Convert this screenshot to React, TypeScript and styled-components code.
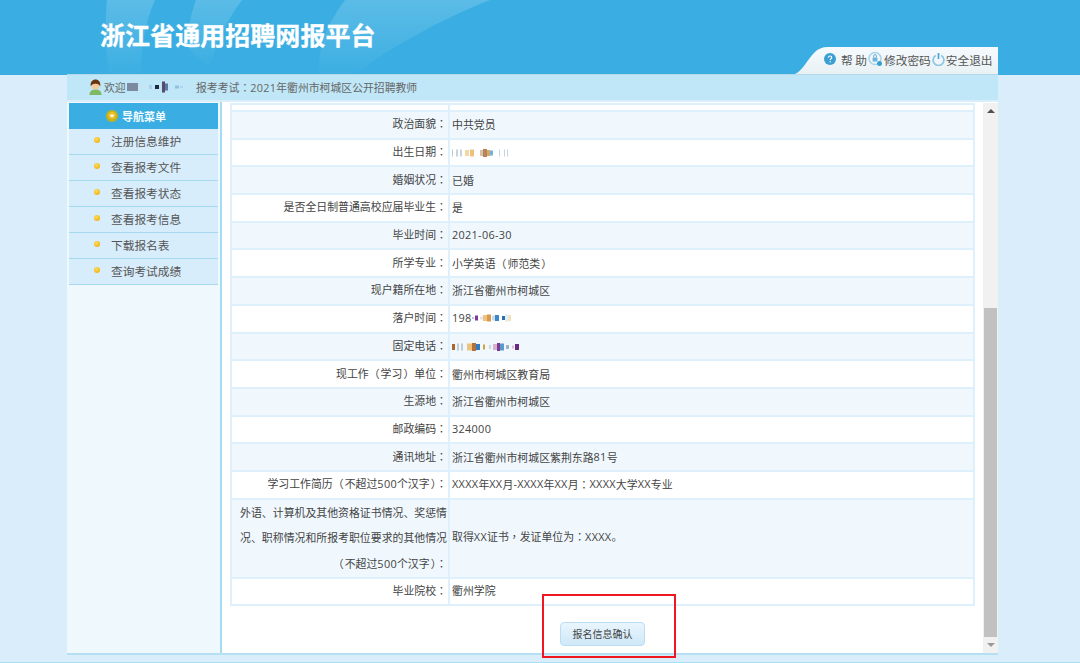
import { Fragment } from "react";
import styled, { createGlobalStyle } from "styled-components";

const GlobalStyle = createGlobalStyle`
  html, body {
    margin: 0;
    padding: 0;
    height: 100%;
    overflow: hidden;
    background: #d9edfb;
    font-family: "Noto Sans CJK SC", "Liberation Sans", sans-serif;
  }
`;

const Page = styled.div`
  position: relative;
  display: flex;
  flex-direction: column;
  height: 663px;
`;

const Header = styled.header`
  position: relative;
  display: flex;
  justify-content: space-between;
  align-items: flex-end;
  height: 75px;
  padding: 0 82px 0 100px;
  box-sizing: border-box;
  background: #3aaee2;
  flex: none;
`;

const Swoosh = styled.svg`
  position: absolute;
  left: 0;
  top: 0;
`;

const Title = styled.h1`
  position: relative;
  align-self: flex-start;
  margin: 17px 0 0;
  font-size: 25px;
  letter-spacing: 0.05px;
  line-height: 34px;
  font-weight: 700;
  color: #ffffff;
  -webkit-text-stroke: 0.3px #ffffff;
`;

const Tab = styled.nav`
  position: relative;
  display: flex;
  align-items: center;
  gap: 1px;
  width: 208px;
  height: 28px;
  padding: 0 0 4px 34px;
  box-sizing: border-box;
  background: linear-gradient(#f5fafd, #e9f1f5);
  clip-path: path("M0 28 C6 28 10 24 14 19 C22 8 26 0 38 0 L208 0 L208 28 Z");
  font-size: 11.7px;
  color: #555;
`;

const TabLink = styled.span<{ $gap?: number }>`
  display: flex;
  align-items: center;
  gap: ${(p) => p.$gap ?? 1}px;
  white-space: pre;
`;

const Frame = styled.div`
  position: relative;
  width: 931px;
  margin: -1px 0 0 67px;
  flex: none;
`;

const StatusBar = styled.div`
  display: flex;
  align-items: center;
  height: 26px;
  box-sizing: border-box;
  padding: 0 0 1px 21px;
  border-top: 1px solid #b4d8e8;
  background: #bfe7f7;
  font-size: 10.85px;
  color: #666;
`;

const Welcome = styled.div`
  display: flex;
  align-items: center;
  gap: 1px;
  width: 108px;
`;

const Main = styled.div`
  display: flex;
  height: 553px;
  margin-top: 2px;
  box-sizing: border-box;
  border-bottom: 2px solid #b5dff3;
`;

const Sidebar = styled.aside`
  width: 155px;
  box-sizing: border-box;
  padding: 1px 2px 0;
  border-right: 2px solid #a5dcf3;
  background: #eff8fd;
  flex: none;
`;

const NavTitle = styled.div`
  display: flex;
  align-items: center;
  gap: 4px;
  height: 26px;
  padding-left: 37px;
  background: #3aaee2;
  font-size: 11px;
  font-weight: 700;
  color: #f2fbff;
`;

const NavItem = styled.div`
  display: flex;
  align-items: center;
  gap: 11px;
  height: 26px;
  box-sizing: border-box;
  padding: 0 0 2px 25px;
  border-bottom: 1px solid #a5d9f0;
  background: #d8edfb;
  font-size: 11.7px;
  color: #555;
`;

const Bullet = styled.i`
  width: 6px;
  height: 6px;
  margin-top: -1px;
  border-radius: 50%;
  background: radial-gradient(circle at 40% 35%, #ffdf5a, #eda000);
`;

const Content = styled.main`
  display: flex;
  flex: 1;
  min-width: 0;
  padding-top: 1px;
  background: #ffffff;
`;

const ScrollArea = styled.div`
  flex: 1;
  min-width: 0;
  padding: 0 8px;
  overflow: hidden;
`;

const Table = styled.table`
  width: 745px;
  table-layout: fixed;
  border-collapse: collapse;
  font-size: 10.9px;
  line-height: 20px;
  color: #444;
`;

const Row = styled.tr<{ $alt?: boolean }>`
  height: 27.7px;
  background: ${(p) => (p.$alt ? "#f0f8fe" : "#ffffff")};
`;

const TallRow = styled(Row)`
  height: 79px;
`;

const TopRow = styled.tr`
  height: 7px;
`;

const Label = styled.td`
  width: 215px;
  padding: 0 1px 3px 0;
  border: 2px solid #def0fc;
  text-align: right;
  white-space: nowrap;
`;

const TallLabel = styled(Label)`
  line-height: 25.6px;
  padding-bottom: 0;
`;

const Value = styled.td`
  padding: 0 0 3px 2px;
  border: 2px solid #def0fc;
  white-space: nowrap;
`;

const ValueLine = styled.span`
  display: inline-flex;
  align-items: center;
  vertical-align: middle;
`;

const Punct = styled.span`
  font-family: "Noto Sans CJK TC", sans-serif;
`;

const OpenParen = styled(Punct)`
  margin-right: 1px;
`;

const CloseParen = styled(Punct)`
  margin-left: 1px;
`;

const Latin = styled.span`
  font-family: "Open Sans", sans-serif;
  letter-spacing: 0.3px;
`;

const ConfirmRow = styled.div`
  display: flex;
  justify-content: center;
  padding-top: 16px;
`;

const ConfirmButton = styled.button`
  width: 85px;
  height: 24px;
  padding: 0 0 2px;
  border: 1px solid #b9def3;
  border-radius: 4px;
  background: linear-gradient(#e9f5fd, #cfe8f8);
  font-family: inherit;
  font-size: 10px;
  color: #444;
`;

const Scrollbar = styled.div`
  display: flex;
  flex-direction: column;
  width: 15px;
  background: #f1f1f1;
  flex: none;
`;

const ScrollButton = styled.div`
  display: flex;
  align-items: center;
  justify-content: center;
  height: 17px;
  padding-bottom: 1px;
  box-sizing: border-box;
  flex: none;
`;

const Arrow = styled.i<{ $down?: boolean }>`
  width: 0;
  height: 0;
  border-left: 4px solid transparent;
  border-right: 4px solid transparent;
  ${(p) => (p.$down ? "border-top: 4px solid #999;" : "border-bottom: 4px solid #505050;")}
`;

const Track = styled.div`
  flex: 1;
  padding: 188px 1px 0;
`;

const Thumb = styled.div`
  height: 329px;
  background: #c1c1c1;
`;

const Footer = styled.div`
  height: 1px;
  margin-top: auto;
  background: #a9e0f7;
  flex: none;
`;

const Annotation = styled.div`
  position: absolute;
  left: 542px;
  top: 594px;
  width: 134px;
  height: 64px;
  box-sizing: border-box;
  border: 2px solid #f01622;
  pointer-events: none;
`;

const MosaicBox = styled.svg`
  display: block;
  filter: blur(0.6px);
  flex: none;
`;

type Dot = [number, number, number, string];

const Mosaic = ({ width, dots }: { width: number; dots: Dot[] }) => (
  <MosaicBox width={width} height={12} viewBox={`0 0 ${width} 12`}>
    {dots.map(([x, w, h, c], i) => (
      <rect key={i} x={x} y={(12 - h) / 2} width={w} height={h} fill={c} />
    ))}
  </MosaicBox>
);

const birthDots: Dot[] = [
  [0, 1, 7, "#b9cad6"], [4, 2, 7, "#c6d4de"], [8, 2, 7, "#c8d6e0"], [13, 4, 6, "#f2d9a0"],
  [18, 4, 7, "#eec27e"], [28, 3, 6, "#d9c0a8"], [31, 4, 8, "#b5845a"], [35, 3, 6, "#d8a868"],
  [38, 3, 5, "#6fb2e2"], [47, 1, 7, "#c6d4de"], [52, 1, 7, "#c6d4de"], [55, 1, 7, "#c6d4de"],
];

const settleDots: Dot[] = [
  [0, 2, 2, "#c9c0d8"], [3, 3, 5, "#7a3b90"], [8, 4, 3, "#e8e0ee"], [11, 4, 6, "#eec27e"],
  [15, 4, 7, "#d89a50"], [20, 3, 5, "#c6dcee"], [23, 4, 6, "#3f86c8"], [30, 3, 4, "#2a6cb0"],
  [33, 3, 8, "#e6eef6"], [36, 3, 6, "#f0e4c0"],
];

const phoneDots: Dot[] = [
  [0, 3, 6, "#a8682e"], [5, 2, 7, "#bcccd8"], [9, 2, 7, "#bcccd8"], [15, 5, 7, "#eec27e"],
  [20, 4, 8, "#b5703a"], [24, 4, 6, "#2f7cc0"], [31, 2, 5, "#d8a040"], [37, 2, 4, "#cad6e0"],
  [41, 4, 6, "#d8b0d0"], [45, 3, 8, "#7a3b90"], [48, 4, 7, "#5a9ad0"], [54, 3, 4, "#9fb4c6"],
  [60, 2, 3, "#d8c0d0"], [63, 4, 6, "#6a2a80"],
];

const nameDots: Dot[] = [
  [0, 11, 8, "#7c8aa0"], [15, 3, 3, "#cfe3ee"], [22, 3, 4, "#a9d0e6"], [28, 4, 4, "#1c2a3a"],
  [35, 3, 11, "#5a4a6a"], [38, 3, 7, "#5a78a8"], [48, 4, 3, "#8fc0e0"], [53, 3, 2, "#b0d4ea"],
];

// the original's punctuation is centred in its cell and its latin is wider than the CJK font's
const fmt = (text: string) =>
  text.split(/([（）：，]|[A-Za-z0-9-]+)/).map((part, i) => {
    if (i % 2 === 0) return <Fragment key={i}>{part}</Fragment>;
    if (part === "（") return <OpenParen key={i}>{part}</OpenParen>;
    if (part === "）") return <CloseParen key={i}>{part}</CloseParen>;
    if (/[：，]/.test(part)) return <Punct key={i}>{part}</Punct>;
    return <Latin key={i}>{part}</Latin>;
  });

const rows: { label: string; value: React.ReactNode }[] = [
  { label: "政治面貌：", value: "中共党员" },
  { label: "出生日期：", value: <Mosaic width={60} dots={birthDots} /> },
  { label: "婚姻状况：", value: "已婚" },
  { label: "是否全日制普通高校应届毕业生：", value: "是" },
  { label: "毕业时间：", value: fmt("2021-06-30") },
  { label: "所学专业：", value: fmt("小学英语（师范类）") },
  { label: "现户籍所在地：", value: "浙江省衢州市柯城区" },
  {
    label: "落户时间：",
    value: (
      <>
        {fmt("198")}
        <Mosaic width={41} dots={settleDots} />
      </>
    ),
  },
  { label: "固定电话：", value: <Mosaic width={68} dots={phoneDots} /> },
  { label: "现工作（学习）单位：", value: "衢州市柯城区教育局" },
  { label: "生源地：", value: "浙江省衢州市柯城区" },
  { label: "邮政编码：", value: fmt("324000") },
  { label: "通讯地址：", value: fmt("浙江省衢州市柯城区紫荆东路81号") },
  { label: "学习工作简历（不超过500个汉字）：", value: fmt("XXXX年XX月-XXXX年XX月：XXXX大学XX专业") },
];

const menu = ["注册信息维护", "查看报考文件", "查看报考状态", "查看报考信息", "下载报名表", "查询考试成绩"];

const Avatar = () => (
  <svg width="15" height="16" viewBox="0 0 15 16">
    <path d="M1.5 16c0-4 2.500-5.500 6-5.500s6 1.500 6 5.500z" fill="#7fba62" />
    <circle cx="7.500" cy="6.500" r="4" fill="#f3c9a0" />
    <path d="M2.800 7.500C2 2.500 4.800.5 7.500.5s5.500 2 4.700 7C11.500 5.200 9.500 4.500 7.500 4.700 5.500 4.500 3.500 5.200 2.800 7.500z" fill="#6a3412" />
  </svg>
);

const MenuIcon = () => (
  <svg width="12" height="12" viewBox="0 0 12 12">
    <circle cx="6" cy="6" r="6" fill="#c4b41c" />
    <circle cx="6" cy="5.500" r="3.600" fill="#f1c22e" />
    <path d="M3.500 4.700h5L6 7.500z" fill="#ffffff" />
  </svg>
);

const HelpIcon = () => (
  <svg width="12" height="12" viewBox="0 0 12 12">
    <circle cx="6" cy="6" r="6" fill="#3a9fd2" />
    <path d="M4.300 4.600C4.400 3.600 5.100 3 6.100 3s1.700.6 1.700 1.500c0 1.200-1.600 1.300-1.600 2.500" fill="none" stroke="#fff" strokeWidth="1.100" />
    <circle cx="6.200" cy="8.800" r=".7" fill="#fff" />
  </svg>
);

const PasswordIcon = () => (
  <svg width="15" height="16" viewBox="0 0 15 16">
    <circle cx="7" cy="7.500" r="6" fill="none" stroke="#a9d4ea" strokeWidth="1.600" />
    <rect x="4.600" y="6.500" width="4.800" height="4" rx=".6" fill="#6fb4da" />
    <path d="M5.600 6.500V5a1.400 1.400 0 0 1 2.800 0v1.500" fill="none" stroke="#6fb4da" />
    <circle cx="11.500" cy="12.500" r="2.500" fill="#3a9fd2" />
  </svg>
);

const PowerIcon = () => (
  <svg width="13" height="14" viewBox="0 0 13 14">
    <path d="M3.800 3.400a5.400 5.400 0 1 0 5.400 0" fill="none" stroke="#8cc6e4" strokeWidth="1.700" />
    <path d="M6.500 1v6" stroke="#4aa6d6" strokeWidth="1.700" />
  </svg>
);

export default function App() {
  return (
    <Page>
      <GlobalStyle />
      <Header>
        <Swoosh width="520" height="75" viewBox="0 0 520 75">
          <defs>
            <linearGradient id="fade" x1="0" y1="0" x2="0" y2="1">
              <stop offset="0" stopColor="#ffffff" stopOpacity=".17" />
              <stop offset="1" stopColor="#ffffff" stopOpacity=".01" />
            </linearGradient>
          </defs>
          <path d="M107 0h48c-10 22-14 48-14 75h-32c-4-26-4-52-2-75z" fill="url(#fade)" />
          <path d="M196 0h46c-14 18-26 44-32 66-10-6-16-12-22-18 0-18 2-32 8-48z" fill="url(#fade)" />
          <path d="M345 0h145c-50 20-98 46-136 75h-34c-4-26 8-52 25-75z" fill="url(#fade)" />
        </Swoosh>
        <Title>浙江省通用招聘网报平台</Title>
        <Tab>
          <TabLink $gap={5}>
            <HelpIcon />
            帮 助
          </TabLink>
          <TabLink>
            <PasswordIcon />
            修改密码
          </TabLink>
          <TabLink>
            <PowerIcon />
            安全退出
          </TabLink>
        </Tab>
      </Header>
      <Frame>
        <StatusBar>
          <Welcome>
            <Avatar />
            欢迎
            <Mosaic width={56} dots={nameDots} />
          </Welcome>
          <span>{fmt("报考考试：2021年衢州市柯城区公开招聘教师")}</span>
        </StatusBar>
        <Main>
          <Sidebar>
            <NavTitle>
              <MenuIcon />
              导航菜单
            </NavTitle>
            {menu.map((item) => (
              <NavItem key={item}>
                <Bullet />
                {item}
              </NavItem>
            ))}
          </Sidebar>
          <Content>
            <ScrollArea>
              <Table>
                <tbody>
                  <TopRow>
                    <Label />
                    <Value />
                  </TopRow>
                  {rows.map((row, i) => (
                    <Row key={row.label} $alt={i % 2 === 0}>
                      <Label>{fmt(row.label)}</Label>
                      <Value>
                        <ValueLine>{row.value}</ValueLine>
                      </Value>
                    </Row>
                  ))}
                  <TallRow $alt>
                    <TallLabel>
                      外语、计算机及其他资格证书情况、奖惩情
                      <br />
                      况、职称情况和所报考职位要求的其他情况
                      <br />
                      {fmt("（不超过500个汉字）：")}
                    </TallLabel>
                    <Value>{fmt("取得XX证书，发证单位为：XXXX。")}</Value>
                  </TallRow>
                  <Row>
                    <Label>{fmt("毕业院校：")}</Label>
                    <Value>衢州学院</Value>
                  </Row>
                </tbody>
              </Table>
              <ConfirmRow>
                <ConfirmButton>报名信息确认</ConfirmButton>
              </ConfirmRow>
            </ScrollArea>
            <Scrollbar>
              <ScrollButton>
                <Arrow />
              </ScrollButton>
              <Track>
                <Thumb />
              </Track>
              <ScrollButton>
                <Arrow $down />
              </ScrollButton>
            </Scrollbar>
          </Content>
        </Main>
      </Frame>
      <Footer />
      <Annotation />
    </Page>
  );
}
